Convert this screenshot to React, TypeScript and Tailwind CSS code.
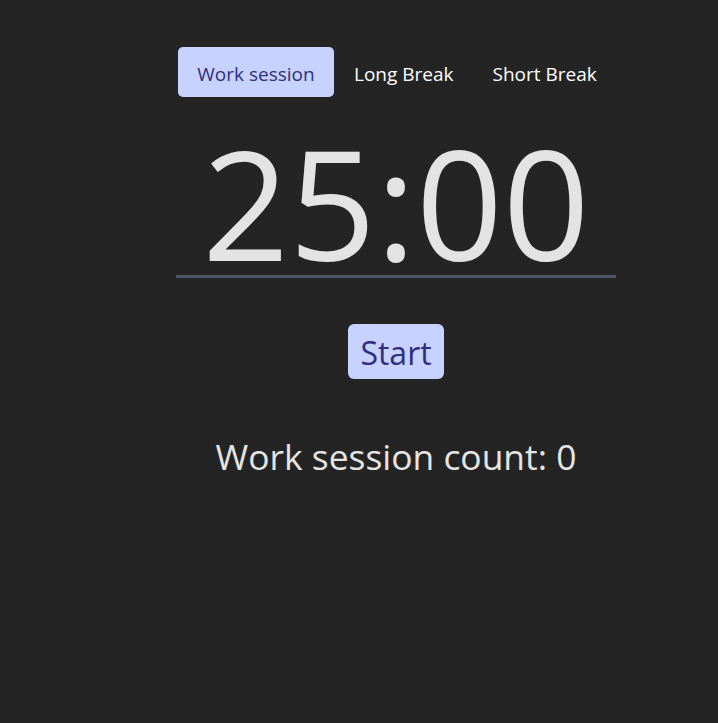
export default function App() {
  const font = { fontFamily: '"Open Sans", "Noto Sans", sans-serif' };
  return (
    <div className="min-h-[723px] w-full bg-[#242424]" style={font}>
      <div className="ml-[176px] flex w-[440px] flex-col items-center pt-[47px]">
        <div className="flex w-full items-center pl-[2px]">
          <button className="h-[50px] w-[156px] shrink-0 whitespace-nowrap rounded-[5px] bg-[#c7d2fe] pt-[4px] text-[19px] text-[#312e81]">
            Work session
          </button>
          <button className="h-[50px] shrink-0 whitespace-nowrap pl-[20px] pr-[19px] pt-[4px] text-[19px] text-white">
            Long Break
          </button>
          <button className="h-[50px] shrink-0 whitespace-nowrap px-[20px] pt-[4px] text-[19px] text-white">
            Short Break
          </button>
        </div>
        <div className="mt-[34px] w-full border-b-[3px] border-[#4b5563] text-center text-[152px] leading-[144px] text-[#e3e3e3]">
          25:00
        </div>
        <button className="mt-[46px] h-[55px] w-[96px] rounded-[6px] bg-[#c7d2fe] pt-[3px] text-[32px] leading-none text-[#312e81]">
          Start
        </button>
        <div className="mt-[51px] text-[35.4px] text-[#e5e5e5]">Work session count: 0</div>
      </div>
    </div>
  );
}
